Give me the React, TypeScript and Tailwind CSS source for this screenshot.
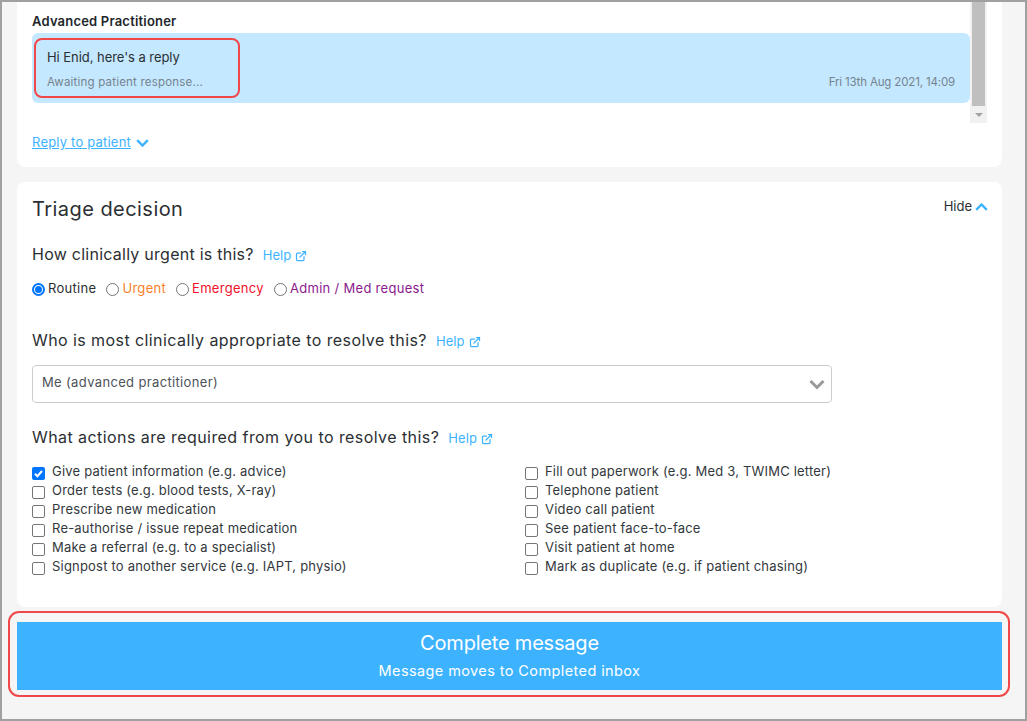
import { ExternalLink } from 'lucide-react';

const leftActions = [
    'Give patient information (e.g. advice)',
    'Order tests (e.g. blood tests, X-ray)',
    'Prescribe new medication',
    'Re-authorise / issue repeat medication',
    'Make a referral (e.g. to a specialist)',
    'Signpost to another service (e.g. IAPT, physio)',
];

const rightActions = [
    'Fill out paperwork (e.g. Med 3, TWIMC letter)',
    'Telephone patient',
    'Video call patient',
    'See patient face-to-face',
    'Visit patient at home',
    'Mark as duplicate (e.g. if patient chasing)',
];

function Chevron({ up, className }: { up?: boolean; className?: string }) {
    return (
        <svg width="13" height="8" viewBox="0 0 13 8" fill="none" className={className}>
            <path d={up ? 'M1.2 6.8 L6.5 1.5 L11.8 6.8' : 'M1.2 1.2 L6.5 6.5 L11.8 1.2'} stroke="currentColor" strokeWidth="2.4" />
        </svg>
    );
}

function Help() {
    return (
        <a className="inline-flex items-center gap-[4px] text-[13px] text-[#3db3ff] ml-[9px] mt-[4px] tracking-[0.1px]">
            Help
            <ExternalLink size={12} strokeWidth={2.5} />
        </a>
    );
}

function Radio({ label, color, checked }: { label: string; color: string; checked?: boolean }) {
    return (
        <label className="flex items-center h-5 mr-[10px]">
            <span
                className={`w-[13px] h-[13px] rounded-full bg-white flex items-center justify-center border ${
                    checked ? 'border-[#0075ff] border-2' : 'border-[#767676]'
                }`}
            >
                {checked && <span className="w-[7px] h-[7px] rounded-full bg-[#0075ff]" />}
            </span>
            <span className={`ml-[3px] text-[13px] tracking-[0.3px] ${color}`}>{label}</span>
        </label>
    );
}

function Check({ label, checked }: { label: string; checked?: boolean }) {
    return (
        <label className="flex items-center h-[19px]">
            <span
                className={`w-[13px] h-[13px] rounded-[2px] flex items-center justify-center mt-[4px] ${
                    checked ? 'bg-[#0075ff]' : 'bg-white border border-[#767676]'
                }`}
            >
                {checked && (
                    <svg width="11" height="11" viewBox="0 0 11 11" fill="none">
                        <path d="M2 5.8 L4.4 8.2 L9 3" stroke="white" strokeWidth="2" />
                    </svg>
                )}
            </span>
            <span className="ml-[7px] text-[13px] tracking-[0.2px] text-[#33383d]">{label}</span>
        </label>
    );
}

export default function App() {
    return (
        <div className="w-[1027px] h-[721px] border-2 border-[#a0a0a0] bg-[#f5f5f5] overflow-hidden pl-[15px] pr-[23px] font-['Inter',sans-serif] text-[#2b2f33]">
            <div className="bg-white rounded-b-lg h-[165px] pl-[15px]">
                <div className="flex h-[121px]">
                    <div className="w-[938px]">
                        <div className="h-[31px] pt-[11px] text-[13px] leading-4 font-semibold tracking-[0.2px] text-[#22262a]">
                            Advanced Practitioner
                        </div>
                        <div className="relative h-[70px] bg-[#c4e8ff] rounded-md flex justify-between items-end pl-[15px] pr-[15px] pb-[13px]">
                            <div>
                                <div className="text-[13px] leading-5 mb-[7px] text-[#2b2f33] tracking-[-0.05px]">Hi Enid, here's a reply</div>
                                <div className="text-[11.5px] leading-4 text-[#75838f] tracking-[0.2px]">Awaiting patient response...</div>
                            </div>
                            <div className="text-[11.5px] leading-4 text-[#75838f] tracking-[-0.15px]">Fri 13th Aug 2021, 14:09</div>
                            <div className="absolute left-[2px] top-[5px] w-[206px] h-[60px] border-2 border-[#f04848] rounded-lg" />
                        </div>
                    </div>
                    <div className="w-[17px] bg-[#f1f1f1] flex flex-col items-center">
                        <div className="w-[13px] h-[104px] bg-[#bfbfbf]" />
                        <div className="flex-1 flex items-center justify-center">
                            <div className="w-0 h-0 border-l-[4px] border-r-[4px] border-t-[4px] border-l-transparent border-r-transparent border-t-[#a3a3a3]" />
                        </div>
                    </div>
                </div>
                <div className="flex items-center gap-[5px] h-5 mt-[10px] text-[13px] text-[#3db3ff]">
                    <span className="underline tracking-[0.2px]">Reply to patient</span>
                    <Chevron />
                </div>
            </div>

            <div className="bg-white rounded-lg h-[425px] mt-[15px] px-[15px] pt-[13px]">
                <div className="flex justify-between items-center h-7">
                    <div className="text-[20px] tracking-[0.45px]">Triage decision</div>
                    <div className="flex items-center gap-[3px] text-[13px] -mr-[1px] mb-1">
                        Hide
                        <Chevron up className="text-[#3db3ff]" />
                    </div>
                </div>

                <div className="flex items-center h-6 mt-[19px] text-[16px] tracking-[0.25px]">
                    How clinically urgent is this?
                    <Help />
                </div>
                <div className="flex mt-[13px]">
                    <Radio label="Routine" color="text-[#2b2f33]" checked />
                    <Radio label="Urgent" color="text-[#f97f2a]" />
                    <Radio label="Emergency" color="text-[#f0102c]" />
                    <Radio label="Admin / Med request" color="text-[#8a1a8e]" />
                </div>

                <div className="flex items-center h-6 mt-[29px] text-[16px] tracking-[0.42px]">
                    Who is most clinically appropriate to resolve this?
                    <Help />
                </div>
                <div className="flex items-center justify-between w-[800px] h-[38px] mt-[13px] pl-[9px] pr-[5px] border border-[#cccccc] rounded text-[13px] text-[#4d5359]">
                    <span className="mb-[2px] tracking-[0.35px]">Me (advanced practitioner)</span>
                    <svg width="16" height="11" viewBox="0 0 16 11" fill="none" className="mr-[1px]">
                        <path d="M1.5 2 L8 8.5 L14.5 2" stroke="#999999" strokeWidth="3" />
                    </svg>
                </div>

                <div className="flex items-center h-6 mt-[22px] text-[16px] tracking-[0.43px]">
                    What actions are required from you to resolve this?
                    <Help />
                </div>
                <div className="flex mt-[13px]">
                    <div className="w-[493px]">
                        {leftActions.map((a, i) => (
                            <Check key={a} label={a} checked={i === 0} />
                        ))}
                    </div>
                    <div>
                        {rightActions.map(a => (
                            <Check key={a} label={a} />
                        ))}
                    </div>
                </div>
            </div>

            <div className="relative h-[68px] mt-[15px] bg-[#3db3ff] text-white flex flex-col items-center">
                <div className="text-[20px] leading-7 mt-[7px] tracking-[-0.2px]">Complete message</div>
                <div className="text-[14.5px] leading-5 mt-[4px] tracking-[0.4px]">Message moves to Completed inbox</div>
                <div className="absolute -left-[9px] -right-[8px] -top-[11px] -bottom-[7px] border-2 border-[#f04848] rounded-[11px]" />
            </div>
        </div>
    );
}
